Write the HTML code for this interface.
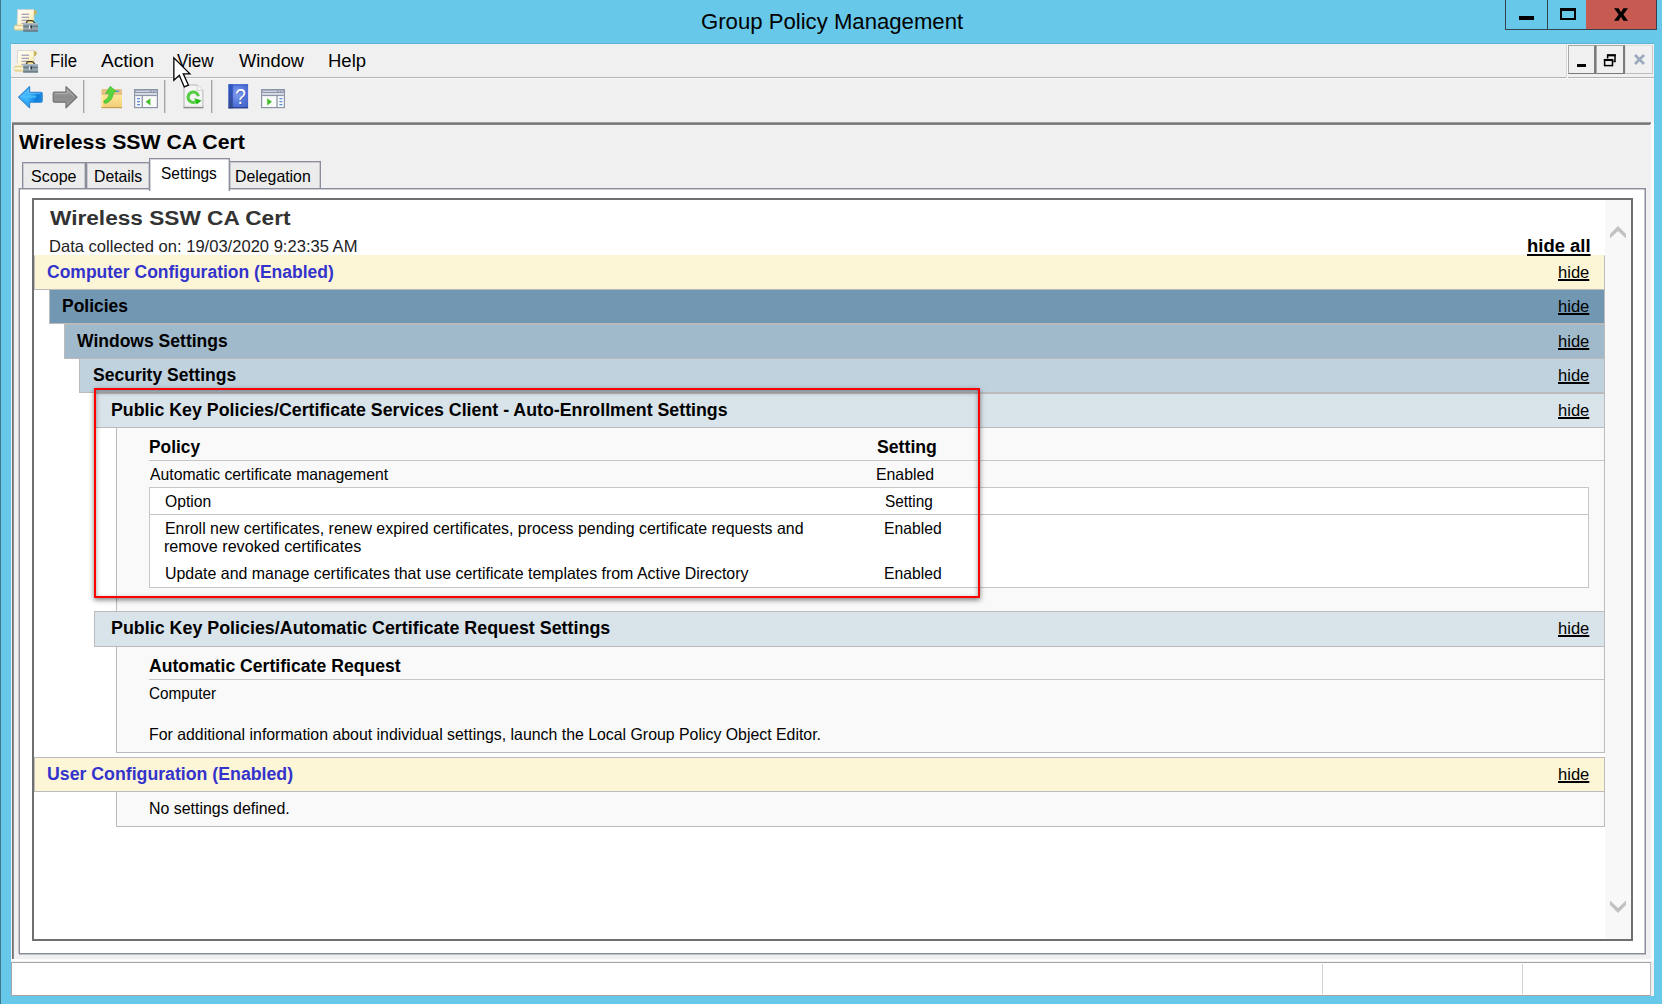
<!DOCTYPE html>
<html><head><meta charset="utf-8"><title>Group Policy Management</title>
<style>
html,body{margin:0;padding:0}
body{width:1662px;height:1004px;overflow:hidden;position:relative;background:#67C8E9;font-family:"Liberation Sans",sans-serif}
.r{position:absolute;box-sizing:border-box}
.t{position:absolute;transform-origin:0 0;white-space:nowrap;font-family:"Liberation Sans",sans-serif}
svg{position:absolute;overflow:visible}
.band{position:absolute;box-sizing:border-box;border:1px solid #BBBBBB}
.cont{position:absolute;box-sizing:border-box;border:1px solid #BBBBBB;background:#F9F9F9}
.tab{position:absolute;box-sizing:border-box;border:1px solid #8A8D9B;border-bottom:none;background:#ECECEC;box-shadow:inset 1px 1px 0 rgba(138,141,155,.35), inset -1px 0 0 rgba(138,141,155,.35)}
.sep{position:absolute;width:1px;top:80px;height:33px;background:#A4A4A4;box-shadow:1px 0 0 #D6D6D6}

</style></head><body>
<!-- window frame -->
<div class="r" style="left:0;top:0;width:1px;height:1004px;background:#3C788B"></div>
<div class="r" style="left:11px;top:43px;width:1643px;height:1px;background:#5FB4D1"></div>

<!-- caption buttons -->
<div class="r" style="left:1505px;top:0;width:152px;height:30px;background:#35434A"></div>
<div class="r" style="left:1506px;top:0;width:41px;height:29px;background:#67C8E9"></div>
<div class="r" style="left:1548px;top:0;width:38px;height:29px;background:#67C8E9"></div>
<div class="r" style="left:1586px;top:0;width:70px;height:29px;background:#C75B52"></div>
<div class="r" style="left:1519px;top:16px;width:15px;height:4px;background:#000"></div>
<div class="r" style="left:1560px;top:8px;width:16px;height:12px;border:2px solid #000;border-top-width:3px"></div>
<svg style="left:1614px;top:7.8px" width="14" height="13" viewBox="0 0 14 12.5"><path d="M0 0 H4.6 L7 3.9 L9.4 0 H14 L9.4 6.25 L14 12.5 H9.4 L7 8.6 L4.6 12.5 H0 L4.6 6.25 Z" fill="#000"/></svg>

<!-- client area -->
<div class="r" style="left:11px;top:44px;width:1643px;height:952px;background:#F0F0F0"></div>

<!-- menu bar bottom lines -->
<div class="r" style="left:11px;top:77px;width:1555px;height:1px;background:#B4B4B4"></div>
<div class="r" style="left:1568px;top:77px;width:86px;height:1px;background:#B4B4B4"></div>
<div class="r" style="left:11px;top:78px;width:1643px;height:1px;background:#FAFAFA"></div>
<div class="r" style="left:1566px;top:44px;width:1px;height:34px;background:#D8D8D8"></div>
<div class="r" style="left:1567px;top:44px;width:1px;height:34px;background:#FAFAFA"></div>

<!-- MDI child buttons -->
<div class="r" style="left:1568px;top:45px;width:28px;height:29px;border:1px solid #8A8A8A;border-width:1px 2px 1px 1px;border-color:#A8A8A8 #7C7C7C #787878 #A8A8A8;background:#F0F0F0"></div>
<div class="r" style="left:1596px;top:45px;width:29px;height:29px;border:1px solid #8A8A8A;border-width:1px 2px 1px 1px;border-color:#A8A8A8 #7C7C7C #787878 #A8A8A8;background:#F0F0F0"></div>
<div class="r" style="left:1625px;top:45px;width:28px;height:29px;border:1px solid #D0D0D0;border-width:1px 1px 1px 1px;border-color:#E0E0E0 #C8C8C8 #BEBEBE #E0E0E0;background:#F0F0F0"></div>
<div class="r" style="left:1577px;top:64px;width:9px;height:3px;background:#000"></div>
<svg style="left:1603px;top:53px" width="14" height="15" viewBox="0 0 14 15"><path d="M4.6 5.4 V2.2 H12 V8.6 H10.4" stroke="#000" stroke-width="1.5" fill="none"/><path d="M4 2.3 H12.8" stroke="#000" stroke-width="2.1" fill="none"/><rect x="1.6" y="6.8" width="7.9" height="5.8" stroke="#000" stroke-width="1.5" fill="none"/><path d="M.9 7 H10.2" stroke="#000" stroke-width="2.1"/></svg>
<svg style="left:1633px;top:53px" width="13" height="13" viewBox="0 0 13 13"><path d="M2 2 L11 11 M11 2 L2 11" stroke="#9AA9BC" stroke-width="2.6" fill="none"/></svg>

<!-- toolbar separators -->
<div class="sep" style="left:83px"></div>
<div class="sep" style="left:164px"></div>
<div class="sep" style="left:211px"></div>

<!-- sunken panel border -->
<div class="r" style="left:12px;top:122px;width:1639px;height:1px;background:#9E9E9E"></div>
<div class="r" style="left:12px;top:123px;width:1639px;height:1px;background:#767676"></div>
<div class="r" style="left:12px;top:124px;width:1638px;height:1px;background:#848484"></div>
<div class="r" style="left:12px;top:123px;width:1px;height:836px;background:#747474"></div><div class="r" style="left:13px;top:124px;width:1px;height:835px;background:#8A8A8A"></div>
<div class="r" style="left:1651px;top:122px;width:3px;height:839px;background:#FCFCFC"></div>
<div class="r" style="left:12px;top:959px;width:1642px;height:2px;background:#FCFCFC"></div>

<!-- status bar -->
<div class="r" style="left:11px;top:962px;width:1640px;height:34px;background:#FFFFFF;border:1px solid #A6A6A6;border-right-color:#B8B8B8"></div>
<div class="r" style="left:1322px;top:964px;width:1px;height:30px;background:#D2D2D2"></div>
<div class="r" style="left:1522px;top:964px;width:1px;height:30px;background:#D2D2D2"></div>

<!-- tabs -->
<div class="tab" style="left:22px;top:162px;width:64px;height:28px"></div>
<div class="tab" style="left:86px;top:162px;width:64px;height:28px"></div>
<div class="tab" style="left:229px;top:161px;width:92px;height:28px"></div>
<!-- tab page -->
<div class="r" style="left:19px;top:188px;width:1627px;height:766px;background:#FFF;border:1px solid #8A8D9B;box-shadow:-1px 0 0 rgba(138,141,155,.4), inset -1px 0 0 rgba(138,141,155,.5), inset 0 1px 0 rgba(138,141,155,.45), 0 1px 0 rgba(138,141,155,.5)"></div>
<div class="tab" style="left:149px;top:158px;width:81px;height:33px;background:#FFF"></div>

<!-- browser control -->
<div class="r" style="left:32px;top:198px;width:1601px;height:743px;background:#FFF;border:2px solid #6F6F6F"></div>
<div class="r" style="left:1605px;top:200px;width:26px;height:739px;background:#F8F8F8"></div>
<svg style="left:1609px;top:224px" width="18" height="16" viewBox="0 0 18 16"><path d="M1 14.5 V10 L9 2 L17 10 V14.5 L9 7 Z" fill="#C2C2C2"/></svg>
<svg style="left:1609px;top:899px" width="18" height="16" viewBox="0 0 18 16"><path d="M1 1.5 V6 L9 14 L17 6 V1.5 L9 9 Z" fill="#C2C2C2"/></svg>

<!-- report -->
<div class="band" style="left:34px;top:255px;width:1571px;height:35px;background:#FDF6D6;border-top-color:#FDF6D6"></div>
<div class="band" style="left:49px;top:289px;width:1556px;height:35px;background:#7197B3"></div>
<div class="band" style="left:64px;top:324px;width:1541px;height:35px;background:#A0BACB"></div>
<div class="band" style="left:79px;top:358px;width:1526px;height:35px;background:#C0D2DE"></div>
<div class="cont" style="left:116px;top:427px;width:1489px;height:185px"></div>
<div class="band" style="left:94px;top:393px;width:1511px;height:35px;background:#D9E3EA"></div>
<div class="r" style="left:149px;top:460px;width:1455px;height:1px;background:#C6C6C6"></div>
<div class="r" style="left:149px;top:487px;width:1440px;height:101px;background:#FFF;border:1px solid #C6C6C6"></div>
<div class="r" style="left:150px;top:514px;width:1438px;height:1px;background:#C6C6C6"></div>

<div class="cont" style="left:116px;top:646px;width:1489px;height:107px"></div>
<div class="band" style="left:94px;top:611px;width:1511px;height:36px;background:#D9E3EA"></div>
<div class="r" style="left:149px;top:679px;width:1455px;height:1px;background:#C6C6C6"></div>

<div class="cont" style="left:116px;top:791px;width:1489px;height:36px"></div>
<div class="band" style="left:34px;top:757px;width:1571px;height:35px;background:#FDF6D6"></div>

<svg width="0" height="0" style="left:0;top:0">
<defs>
<linearGradient id="gPaper" x1="0" y1="0" x2="1" y2="1"><stop offset="0" stop-color="#FFFEFA"/><stop offset=".5" stop-color="#FFF9DC"/><stop offset="1" stop-color="#FBE9A0"/></linearGradient>
<linearGradient id="gRoll" x1="0" y1="0" x2="0" y2="1"><stop offset="0" stop-color="#E2CB8C"/><stop offset=".45" stop-color="#FFF8E0"/><stop offset="1" stop-color="#EBD47E"/></linearGradient>
<linearGradient id="gBox" x1="0" y1="0" x2="0" y2="1"><stop offset="0" stop-color="#B4C4CE"/><stop offset=".3" stop-color="#8397A2"/><stop offset=".42" stop-color="#667C88"/><stop offset=".6" stop-color="#9DABAF"/><stop offset="1" stop-color="#7A8D98"/></linearGradient>
<linearGradient id="gBack" x1="0" y1="0" x2="1" y2=".25"><stop offset="0" stop-color="#3FB2FF"/><stop offset=".5" stop-color="#3BB4FC"/><stop offset=".85" stop-color="#0C7EDC"/><stop offset="1" stop-color="#1B84DC"/></linearGradient>
<linearGradient id="gFwd" x1="0" y1="0" x2="0" y2="1"><stop offset="0" stop-color="#A6A6A6"/><stop offset=".5" stop-color="#8C8C8C"/><stop offset="1" stop-color="#9E9E9E"/></linearGradient>
<linearGradient id="gFold" x1="0" y1="0" x2="0" y2="1"><stop offset="0" stop-color="#FFE898"/><stop offset="1" stop-color="#F2CB74"/></linearGradient>
<radialGradient id="gHelp" cx=".45" cy=".4" r=".75"><stop offset="0" stop-color="#86A0EE"/><stop offset=".55" stop-color="#5576DC"/><stop offset="1" stop-color="#3E5EC4"/></radialGradient><linearGradient id="gHelpL" x1="0" y1="0" x2="0" y2="1"><stop offset="0" stop-color="#2D58C8"/><stop offset="1" stop-color="#364A8E"/></linearGradient>
</defs></svg>

<!-- title-bar & menu-bar app icons -->
<svg style="left:14px;top:9.4px" width="24" height="23" viewBox="0 0 24 23"><g><path d="M3.6 0.6 H20 V13.5 H3.2 Z" fill="url(#gPaper)" stroke="#CFCFCF" stroke-width=".8"/>
  <path d="M20 1 Q23.2 1 22.8 3.6 Q22.4 6 20 6.4 Z" fill="#C9B45C"/>
  <path d="M3.2 13 V17 H10 V13 Z" fill="#FFF6CF"/>
  <rect x="7.5" y="4.6" width="7.6" height="1.3" fill="#A8A1BF"/>
  <rect x="7.5" y="7.7" width="7.6" height="1.3" fill="#A8A1BF"/>
  <rect x="7.5" y="10.7" width="7.6" height="1.3" fill="#A8A1BF"/>
  <rect x="7.5" y="13.8" width="3" height="1.3" fill="#A8A1BF"/>
  <rect x="0.2" y="16" width="10" height="5.2" rx="1.6" fill="url(#gRoll)" stroke="#D9C27C" stroke-width=".5"/>
  <rect x="13" y="12.2" width="6.6" height="2.2" fill="#F6E08C"/>
  <path d="M12.7 14.5 V13.2 Q12.7 11.7 14.4 11.7 H17.8 Q19.4 11.7 19.9 13 L20.9 14.5" fill="none" stroke="#3B3A28" stroke-width="1.3"/>
  <path d="M9.2 14 H24 V22.4 H9.2 Z" fill="url(#gBox)"/>
  <rect x="9.2" y="21.6" width="14.8" height=".9" fill="#566873"/>
  <rect x="15.1" y="16.6" width="1.3" height="3.2" fill="#F4F7F8"/>
  <rect x="16.5" y="16.2" width="1.5" height="3.4" rx=".7" fill="#2E3A40"/></g></svg>
<svg style="left:14px;top:49.9px" width="24" height="23" viewBox="0 0 24 23"><g><path d="M3.6 0.6 H20 V13.5 H3.2 Z" fill="url(#gPaper)" stroke="#CFCFCF" stroke-width=".8"/>
  <path d="M20 1 Q23.2 1 22.8 3.6 Q22.4 6 20 6.4 Z" fill="#C9B45C"/>
  <path d="M3.2 13 V17 H10 V13 Z" fill="#FFF6CF"/>
  <rect x="7.5" y="4.6" width="7.6" height="1.3" fill="#A8A1BF"/>
  <rect x="7.5" y="7.7" width="7.6" height="1.3" fill="#A8A1BF"/>
  <rect x="7.5" y="10.7" width="7.6" height="1.3" fill="#A8A1BF"/>
  <rect x="7.5" y="13.8" width="3" height="1.3" fill="#A8A1BF"/>
  <rect x="0.2" y="16" width="10" height="5.2" rx="1.6" fill="url(#gRoll)" stroke="#D9C27C" stroke-width=".5"/>
  <rect x="13" y="12.2" width="6.6" height="2.2" fill="#F6E08C"/>
  <path d="M12.7 14.5 V13.2 Q12.7 11.7 14.4 11.7 H17.8 Q19.4 11.7 19.9 13 L20.9 14.5" fill="none" stroke="#3B3A28" stroke-width="1.3"/>
  <path d="M9.2 14 H24 V22.4 H9.2 Z" fill="url(#gBox)"/>
  <rect x="9.2" y="21.6" width="14.8" height=".9" fill="#566873"/>
  <rect x="15.1" y="16.6" width="1.3" height="3.2" fill="#F4F7F8"/>
  <rect x="16.5" y="16.2" width="1.5" height="3.4" rx=".7" fill="#2E3A40"/></g></svg>

<!-- back -->
<svg style="left:18px;top:86px" width="25" height="23" viewBox="0 0 25 23"><path d="M0.6 11.1 L11.6 0.6 V6.2 H23 Q24.2 6.2 24.2 7.4 V15 Q24.2 16.2 23 16.2 H11.6 V21.8 Z" fill="url(#gBack)" stroke="#2F86D2" stroke-width="1.1" stroke-linejoin="round"/><path d="M3 11.1 L10.4 4 V7.6 H22.6" fill="none" stroke="#8AD4FF" stroke-width=".9" opacity=".6"/><path d="M6 10.6 H17" stroke="#4CC4FF" stroke-width="2.4" stroke-linecap="round" opacity=".8"/><path d="M4.4 13.6 L9 17.6" stroke="#2A9CF0" stroke-width="1.6" opacity=".6"/></svg>
<!-- forward -->
<svg style="left:52px;top:86px" width="26" height="23" viewBox="0 0 26 23"><path d="M25 11.1 L14 0.6 V6.2 H2.4 Q1.2 6.2 1.2 7.4 V15 Q1.2 16.2 2.4 16.2 H14 V21.8 Z" fill="url(#gFwd)" stroke="#727272" stroke-width="1.2" stroke-linejoin="round"/><path d="M22.6 11.1 L15.2 4 V7.6 H2.8" fill="none" stroke="#C4C4C4" stroke-width=".8" opacity=".7"/></svg>
<!-- folder up -->
<svg style="left:101px;top:86px" width="22" height="23" viewBox="0 0 22 23"><path d="M0.4 4.4 Q0.4 3 1.8 3 H19.6 Q21 3 21 4.4 V21.6 H0.4 Z" fill="#E5C283"/><rect x="14" y="4.4" width="4.4" height="1.6" rx=".8" fill="#5C9AE8"/><path d="M0.4 9 H21 V22 H0.4 Z" fill="url(#gFold)"/><rect x=".4" y="21" width="20.6" height="1.2" fill="#C39F4E"/><rect x=".4" y="9" width="1.2" height="12" fill="#FFF0B4"/>
<path d="M2.8 15 Q7.8 12.6 8.2 7 L4.6 7.6 L9.2 0.3 L15.4 5.6 L12.4 6.2 Q12.2 14.6 4.6 17.4 Q2.6 17.2 2.8 15 Z" fill="#55D63E" stroke="#3FB82E" stroke-width=".7"/></svg>
<!-- show/hide console tree -->
<svg style="left:134px;top:89px" width="24" height="20" viewBox="0 0 24 20"><g><rect x=".6" y=".6" width="22.8" height="18" fill="#FAFAFA" stroke="#8B94A8" stroke-width="1.2"/>
  <rect x="1.2" y="1.2" width="21.6" height="3.2" fill="#8B94A8"/>
  <rect x="2" y="1.8" width="14" height="1.1" fill="#D9DEE8"/>
  <rect x="17.6" y="1.8" width="1.6" height="1.1" fill="#D9DEE8"/><rect x="20.2" y="1.8" width="1.6" height="1.1" fill="#D9DEE8"/>
  <rect x="1.2" y="4.4" width="21.6" height="1.3" fill="#E4E8F0"/>
  <rect x="1.2" y="5.7" width="21.6" height="1.4" fill="#8B94A8"/></g><rect x="7.6" y="7.1" width="1.3" height="11.4" fill="#8B94A8"/><rect x="3" y="9" width="3" height="1.3" fill="#5C8FD8"/><rect x="3" y="12" width="3" height="1.3" fill="#5C8FD8"/><rect x="3" y="15" width="3" height="1.3" fill="#5C8FD8"/><path d="M11.6 12.8 L16.4 9.2 V16.4 Z" fill="#48BE30"/></svg>
<!-- refresh -->
<svg style="left:183px;top:84px" width="21" height="25" viewBox="0 0 21 25"><path d="M1 1 H14.2 L19.9 6.4 V23.4 H1 Z" fill="#F4F4F4" stroke="#B4B4B4" stroke-width="1"/><path d="M.5 23.6 H20.4" stroke="#8E8E8E" stroke-width="1.5"/><path d="M14.2 1 V6.4 H19.9" fill="#FDFDFD" stroke="#C8C8C8" stroke-width=".9"/><path d="M12.6 17.9 A5.2 5.2 0 1 1 15.4 12.2" fill="none" stroke="#56CC44" stroke-width="3.1"/><path d="M11.4 14.2 L18.6 16.6 L13.6 20.6 Z" fill="#22BE12"/></svg>
<!-- help -->
<svg style="left:228px;top:84px" width="21" height="25" viewBox="0 0 21 25"><rect x=".5" y=".3" width="19.6" height="24" fill="url(#gHelp)"/><rect x=".5" y=".3" width="4.3" height="24" fill="url(#gHelpL)"/><rect x=".5" y=".3" width="19.6" height="1.2" fill="#2F57C4" opacity=".8"/><rect x=".5" y="23.1" width="19.6" height="1.2" fill="#2C4288"/><g transform="translate(12.6,0) scale(.84,1)"><text x=".8" y="20.9" font-family="Liberation Sans, sans-serif" font-size="22.5" fill="#2E4A9E" opacity=".55" text-anchor="middle">?</text><text x="0" y="20.4" font-family="Liberation Sans, sans-serif" font-size="22.5" fill="#FFF" text-anchor="middle">?</text></g></svg>
<!-- show/hide action pane -->
<svg style="left:261.4px;top:89px" width="24" height="20" viewBox="0 0 24 20"><g><rect x=".6" y=".6" width="22.8" height="18" fill="#FAFAFA" stroke="#8B94A8" stroke-width="1.2"/>
  <rect x="1.2" y="1.2" width="21.6" height="3.2" fill="#8B94A8"/>
  <rect x="2" y="1.8" width="14" height="1.1" fill="#D9DEE8"/>
  <rect x="17.6" y="1.8" width="1.6" height="1.1" fill="#D9DEE8"/><rect x="20.2" y="1.8" width="1.6" height="1.1" fill="#D9DEE8"/>
  <rect x="1.2" y="4.4" width="21.6" height="1.3" fill="#E4E8F0"/>
  <rect x="1.2" y="5.7" width="21.6" height="1.4" fill="#8B94A8"/></g><rect x="15.4" y="7.1" width="1.3" height="11.4" fill="#8B94A8"/><rect x="18.4" y="9" width="3" height="1.3" fill="#5C8FD8"/><rect x="18.4" y="12" width="3" height="1.3" fill="#5C8FD8"/><rect x="18.4" y="15" width="3" height="1.3" fill="#5C8FD8"/><path d="M11 12.8 L6.2 9.2 V16.4 Z" fill="#48BE30"/></svg>

<span class="t" id="t0" style="left:700.59px;top:7.00px;font-size:22px;line-height:29px;color:#000;transform:scaleX(1.0063);">Group Policy Management</span>
<span class="t" id="t1" style="left:50.07px;top:50.00px;font-size:18px;line-height:23px;color:#000;transform:scaleX(0.9288);">File</span>
<span class="t" id="t2" style="left:101.00px;top:50.00px;font-size:18px;line-height:23px;color:#000;transform:scaleX(1.0609);">Action</span>
<span class="t" id="t3" style="left:177.40px;top:50.00px;font-size:18px;line-height:23px;color:#000;transform:scaleX(0.9473);">View</span>
<span class="t" id="t4" style="left:239.00px;top:50.00px;font-size:18px;line-height:23px;color:#000;transform:scaleX(1.0151);">Window</span>
<span class="t" id="t5" style="left:327.97px;top:50.00px;font-size:18px;line-height:23px;color:#000;transform:scaleX(1.0275);">Help</span>
<span class="t" id="t6" style="left:19.00px;top:129.00px;font-size:20px;line-height:26px;color:#000;transform:scaleX(1.0630);font-weight:bold;">Wireless SSW CA Cert</span>
<span class="t" id="t7" style="left:30.60px;top:166.00px;font-size:16.5px;line-height:21px;color:#000;transform:scaleX(0.9719);">Scope</span>
<span class="t" id="t8" style="left:94.04px;top:166.00px;font-size:16.5px;line-height:21px;color:#000;transform:scaleX(0.9556);">Details</span>
<span class="t" id="t9" style="left:161.40px;top:163.00px;font-size:16.5px;line-height:21px;color:#000;transform:scaleX(0.9365);">Settings</span>
<span class="t" id="t10" style="left:235.34px;top:166.00px;font-size:16.5px;line-height:21px;color:#000;transform:scaleX(0.9599);">Delegation</span>
<span class="t" id="t11" style="left:50.30px;top:205.00px;font-size:20px;line-height:26px;color:#333;transform:scaleX(1.1318);font-weight:bold;">Wireless SSW CA Cert</span>
<span class="t" id="t12" style="left:49.30px;top:236.00px;font-size:16.5px;line-height:21px;color:#222;transform:scaleX(1.0037);">Data collected on: 19/03/2020 9:23:35 AM</span>
<span class="t" id="t13" style="left:1527.35px;top:235.00px;font-size:17.5px;line-height:23px;color:#000;transform:scaleX(1.0542);font-weight:bold;text-decoration:underline;text-decoration-thickness:2px;text-underline-offset:2px;">hide all</span>
<span class="t" id="t14" style="left:46.80px;top:261.00px;font-size:17.5px;line-height:23px;color:#3333CC;transform:scaleX(1.0002);font-weight:bold;">Computer Configuration (Enabled)</span>
<span class="t" id="t15" style="left:61.70px;top:295.00px;font-size:17.5px;line-height:23px;color:#000;transform:scaleX(0.9983);font-weight:bold;">Policies</span>
<span class="t" id="t16" style="left:77.00px;top:330.00px;font-size:17.5px;line-height:23px;color:#000;transform:scaleX(1.0013);font-weight:bold;">Windows Settings</span>
<span class="t" id="t17" style="left:92.50px;top:364.00px;font-size:17.5px;line-height:23px;color:#000;transform:scaleX(1.0019);font-weight:bold;">Security Settings</span>
<span class="t" id="t18" style="left:111.48px;top:399.00px;font-size:17.5px;line-height:23px;color:#000;transform:scaleX(1.0156);font-weight:bold;">Public Key Policies/Certificate Services Client - Auto-Enrollment Settings</span>
<span class="t" id="t19" style="left:148.71px;top:436.00px;font-size:17.5px;line-height:23px;color:#000;transform:scaleX(0.9898);font-weight:bold;">Policy</span>
<span class="t" id="t20" style="left:877.00px;top:436.00px;font-size:17.5px;line-height:23px;color:#000;transform:scaleX(1.0100);font-weight:bold;">Setting</span>
<span class="t" id="t21" style="left:149.50px;top:464.00px;font-size:16.5px;line-height:21px;color:#000;transform:scaleX(0.9545);">Automatic certificate management</span>
<span class="t" id="t22" style="left:876.04px;top:464.00px;font-size:16.5px;line-height:21px;color:#000;transform:scaleX(0.9600);">Enabled</span>
<span class="t" id="t23" style="left:165.00px;top:491.00px;font-size:16.5px;line-height:21px;color:#000;transform:scaleX(0.9497);">Option</span>
<span class="t" id="t24" style="left:884.70px;top:491.00px;font-size:16.5px;line-height:21px;color:#000;transform:scaleX(0.9318);">Setting</span>
<span class="t" id="t25" style="left:164.64px;top:518.00px;font-size:16.5px;line-height:21px;color:#000;transform:scaleX(0.9643);">Enroll new certificates, renew expired certificates, process pending certificate requests and</span>
<span class="t" id="t26" style="left:164.02px;top:536.00px;font-size:16.5px;line-height:21px;color:#000;transform:scaleX(0.9776);">remove revoked certificates</span>
<span class="t" id="t27" style="left:883.75px;top:518.00px;font-size:16.5px;line-height:21px;color:#000;transform:scaleX(0.9515);">Enabled</span>
<span class="t" id="t28" style="left:164.93px;top:563.00px;font-size:16.5px;line-height:21px;color:#000;transform:scaleX(0.9654);">Update and manage certificates that use certificate templates from Active Directory</span>
<span class="t" id="t29" style="left:883.75px;top:563.00px;font-size:16.5px;line-height:21px;color:#000;transform:scaleX(0.9515);">Enabled</span>
<span class="t" id="t30" style="left:111.48px;top:617.00px;font-size:17.5px;line-height:23px;color:#000;transform:scaleX(1.0206);font-weight:bold;">Public Key Policies/Automatic Certificate Request Settings</span>
<span class="t" id="t31" style="left:149.10px;top:655.00px;font-size:17.5px;line-height:23px;color:#000;transform:scaleX(1.0073);font-weight:bold;">Automatic Certificate Request</span>
<span class="t" id="t32" style="left:148.50px;top:683.00px;font-size:16.5px;line-height:21px;color:#000;transform:scaleX(0.9253);">Computer</span>
<span class="t" id="t33" style="left:148.54px;top:724.00px;font-size:16.5px;line-height:21px;color:#000;transform:scaleX(0.9615);">For additional information about individual settings, launch the Local Group Policy Object Editor.</span>
<span class="t" id="t34" style="left:47.29px;top:763.00px;font-size:17.5px;line-height:23px;color:#3333CC;transform:scaleX(1.0123);font-weight:bold;">User Configuration (Enabled)</span>
<span class="t" id="t35" style="left:148.84px;top:798.00px;font-size:16.5px;line-height:21px;color:#000;transform:scaleX(0.9649);">No settings defined.</span>
<span class="t" id="t36" style="left:1557.70px;top:262.00px;font-size:16.5px;line-height:21px;color:#000;transform:scaleX(1.0027);text-decoration:underline;text-decoration-thickness:1.7px;text-underline-offset:1.4px;">hide</span>
<span class="t" id="t37" style="left:1557.70px;top:296.00px;font-size:16.5px;line-height:21px;color:#000;transform:scaleX(1.0027);text-decoration:underline;text-decoration-thickness:1.7px;text-underline-offset:1.4px;">hide</span>
<span class="t" id="t38" style="left:1557.70px;top:331.00px;font-size:16.5px;line-height:21px;color:#000;transform:scaleX(1.0027);text-decoration:underline;text-decoration-thickness:1.7px;text-underline-offset:1.4px;">hide</span>
<span class="t" id="t39" style="left:1557.70px;top:365.00px;font-size:16.5px;line-height:21px;color:#000;transform:scaleX(1.0027);text-decoration:underline;text-decoration-thickness:1.7px;text-underline-offset:1.4px;">hide</span>
<span class="t" id="t40" style="left:1557.70px;top:400.00px;font-size:16.5px;line-height:21px;color:#000;transform:scaleX(1.0027);text-decoration:underline;text-decoration-thickness:1.7px;text-underline-offset:1.4px;">hide</span>
<span class="t" id="t41" style="left:1557.70px;top:618.00px;font-size:16.5px;line-height:21px;color:#000;transform:scaleX(1.0027);text-decoration:underline;text-decoration-thickness:1.7px;text-underline-offset:1.4px;">hide</span>
<span class="t" id="t42" style="left:1557.70px;top:764.00px;font-size:16.5px;line-height:21px;color:#000;transform:scaleX(1.0027);text-decoration:underline;text-decoration-thickness:1.7px;text-underline-offset:1.4px;">hide</span>
<!-- red annotation rectangle -->
<div class="r" style="left:94px;top:388px;width:886px;height:210px;border:2px solid #FF0000;box-shadow:0 2px 5px rgba(0,0,0,.5), inset 0 2px 5px rgba(0,0,0,.4)"></div>
<!-- cursor -->
<svg style="left:172px;top:55px" width="21" height="35" viewBox="0 0 21 35"><path d="M1.85 2.7 V25.3 L7.3 20.3 L12.3 31.9 L16.4 30.1 L11.3 18.8 H17.9 Z" fill="#FFF" stroke="#000" stroke-width="1.3" stroke-linejoin="miter" stroke-miterlimit="10"/></svg>

</body></html>
